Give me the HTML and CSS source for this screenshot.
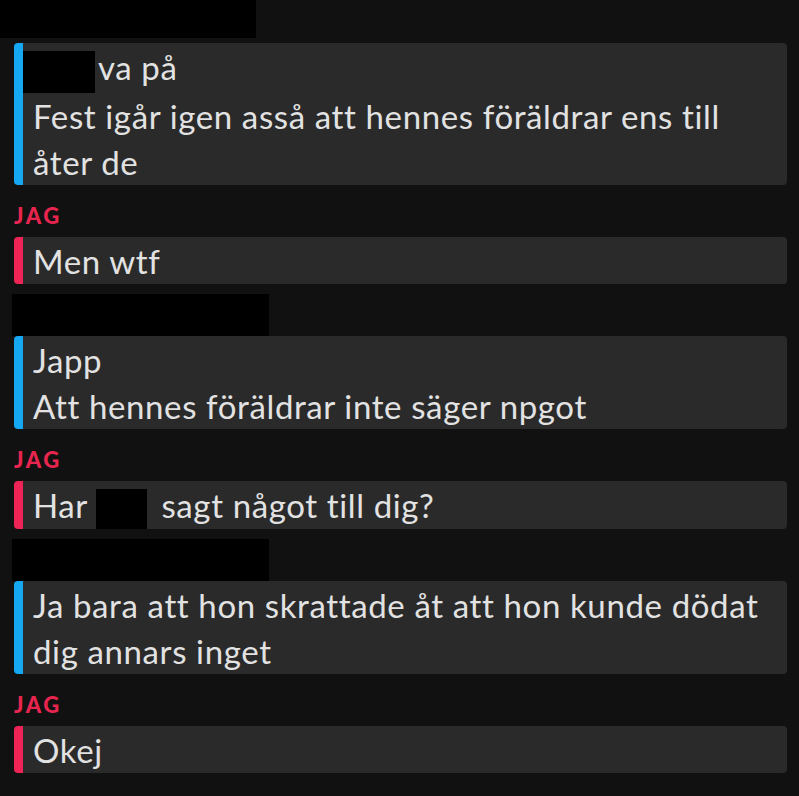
FILE: index.html
```html
<!DOCTYPE html>
<html lang="sv">
<head>
    <meta charset="UTF-8">
    <meta name="viewport" content="width=device-width, initial-scale=1.0">
    <title>Chatt</title>
    <link rel="stylesheet" href="styles.css">
</head>
<body>

    <div class="chat">

        <div class="group">
            <div class="sender"><span class="redact redact-top"></span></div>
            <div class="bubble them">
                <span class="redact redact-start"></span>va på<br>
                Fest igår igen asså att hennes föräldrar ens till åter de
            </div>
        </div>

        <div class="group">
            <div class="sender"><span class="me">JAG</span></div>
            <div class="bubble mine">Men wtf</div>
        </div>

        <div class="group">
            <div class="sender"><span class="redact redact-name"></span></div>
            <div class="bubble them">
                Japp<br>
                Att hennes föräldrar inte säger npgot
            </div>
        </div>

        <div class="group">
            <div class="sender"><span class="me">JAG</span></div>
            <div class="bubble mine">Har <span class="redact redact-word"></span> sagt något till dig?</div>
        </div>

        <div class="group">
            <div class="sender"><span class="redact redact-name"></span></div>
            <div class="bubble them">Ja bara att hon skrattade åt att hon kunde dödat dig annars inget</div>
        </div>

        <div class="group">
            <div class="sender"><span class="me">JAG</span></div>
            <div class="bubble mine">Okej</div>
        </div>

    </div>

</body>
</html>
```

FILE: styles.css
```css
body {
    margin: 0;
    background-color: #111111;
    font-family: Lato, "Noto Sans", sans-serif;
    color: #e2e2e2;
}
.chat {
    padding: 0 12px 0 14px;
}
.group {
    margin-top: 9px;
}
.group:first-child {
    margin-top: 0;
}
.sender {
    height: 43px;
    display: flex;
    align-items: center;
}
.group:first-child .sender {
    align-items: flex-start;
}
.me {
    color: #e8254f;
    font-weight: 900;
    font-size: 22px;
    letter-spacing: 2.5px;
}
.redact {
    display: inline-block;
    background-color: #000;
}
.redact-top {
    width: 256px;
    height: 38px;
    margin-left: -14px;
}
.redact-name {
    width: 257px;
    height: 42px;
    margin-left: -2px;
    align-self: flex-end;
}
.redact-start {
    width: 72px;
    height: 42px;
    margin-left: -10px;
    margin-right: 3px;
    vertical-align: middle;
}
.redact-word {
    width: 51px;
    height: 40px;
    vertical-align: middle;
    margin: 0 5px 0 0;
}
.bubble {
    background-color: #2a2a2a;
    border-left: 9px solid;
    border-radius: 4px;
    padding: 1px 20px 0 10px;
    font-size: 33px;
    letter-spacing: 0.62px;
    line-height: 46px;
}
.them {
    border-left-color: #15a7f2;
}
.mine {
    border-left-color: #ee2457;
}
```
